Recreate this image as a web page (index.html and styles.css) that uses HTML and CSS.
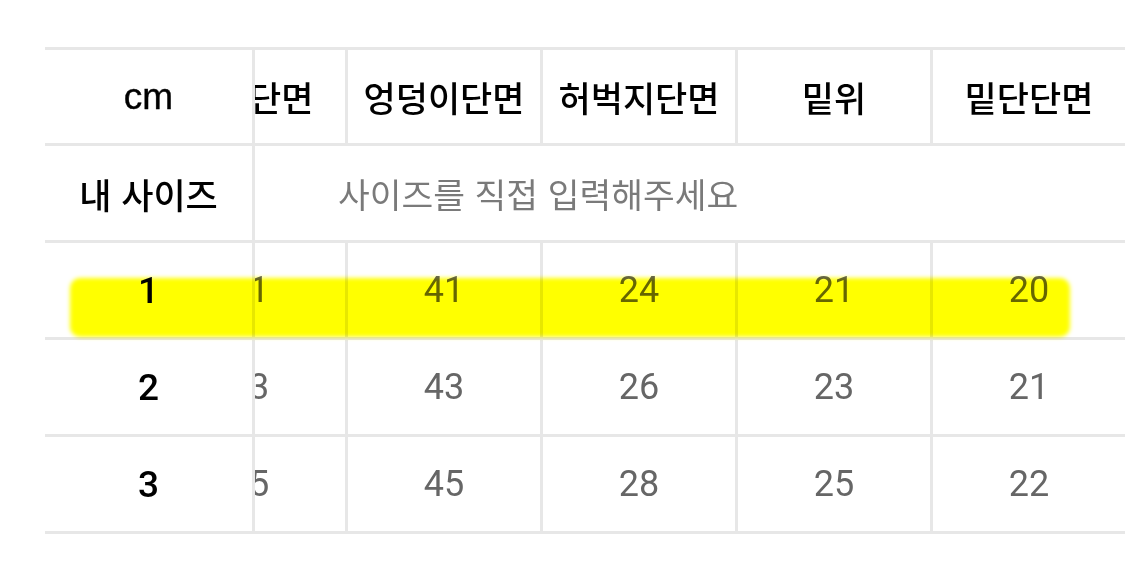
FILE: index.html
```html
<!DOCTYPE html>
<html lang="ko">
<head>
<meta charset="utf-8">
<title>사이즈</title>
<link rel="stylesheet" href="styles.css">
</head>
<body>
<div class="sheet">
  <div class="table">
    <div class="fixed">
      <div class="fcell head unit">cm</div>
      <div class="fcell label">내 사이즈</div>
      <div class="fcell num">1</div>
      <div class="fcell num">2</div>
      <div class="fcell num">3</div>
    </div>
    <div class="scroll">
      <div class="track">
        <div class="row head">
          <div class="cell">허리단면</div>
          <div class="cell">엉덩이단면</div>
          <div class="cell">허벅지단면</div>
          <div class="cell">밑위</div>
          <div class="cell">밑단단면</div>
        </div>
        <div class="row input">
          <span class="placeholder">사이즈를 직접 입력해주세요</span>
        </div>
        <div class="row data">
          <div class="cell">31</div>
          <div class="cell">41</div>
          <div class="cell">24</div>
          <div class="cell">21</div>
          <div class="cell">20</div>
        </div>
        <div class="row data">
          <div class="cell">33</div>
          <div class="cell">43</div>
          <div class="cell">26</div>
          <div class="cell">23</div>
          <div class="cell">21</div>
        </div>
        <div class="row data">
          <div class="cell">35</div>
          <div class="cell">45</div>
          <div class="cell">28</div>
          <div class="cell">25</div>
          <div class="cell">22</div>
        </div>
      </div>
    </div>
  </div>
  <div class="mark"></div>
</div>
</body>
</html>
```
FILE: styles.css
```css
html, body {
  margin: 0;
  padding: 0;
  background: #ffffff;
}

.sheet {
  position: relative;
  padding: 47px 0 0 45px;
  height: 580px;
  box-sizing: border-box;
  overflow: hidden;
  font-family: "Noto Sans CJK KR", "Noto Sans", sans-serif;
}

.table {
  display: flex;
  border-top: 3px solid #e7e7e7;
}

.fixed {
  flex: none;
  width: 210px;
  box-sizing: border-box;
  border-right: 3px solid #e7e7e7;
  background: #ffffff;
}

.fcell {
  height: 97px;
  box-sizing: border-box;
  border-bottom: 3px solid #e7e7e7;
  display: flex;
  align-items: center;
  justify-content: center;
  color: #000000;
}

.fcell.head {
  height: 96px;
}

.unit {
  font-family: "Liberation Sans", Arial, sans-serif;
  font-size: 37px;
  -webkit-text-stroke: 0.4px #000000;
}

.label {
  font-size: 35px;
  font-weight: 500;
}

.num {
  font-family: Roboto, "Liberation Sans", sans-serif;
  font-size: 37px;
  font-weight: 500;
}

.scroll {
  flex: 1;
  overflow: hidden;
}

.track {
  margin-left: -105px;
  width: max-content;
}

.row {
  display: flex;
  height: 97px;
  box-sizing: border-box;
  border-bottom: 3px solid #e7e7e7;
}

.row.head {
  height: 96px;
}

.cell {
  width: 195px;
  box-sizing: border-box;
  border-left: 3px solid #e7e7e7;
  display: flex;
  align-items: center;
  justify-content: center;
}

.head .cell {
  font-size: 35px;
  font-weight: 500;
  color: #000000;
  white-space: nowrap;
}

.data .cell {
  font-family: Roboto, "Liberation Sans", sans-serif;
  font-size: 36px;
  color: #666666;
}

.input {
  align-items: center;
  padding-left: 188px;
}

.placeholder {
  font-size: 34.5px;
  color: #7a7a7a;
}

.mark {
  position: absolute;
  left: 70px;
  top: 278px;
  width: 1000px;
  height: 59px;
  background: #ffff00;
  border-radius: 10px;
  filter: blur(2px);
  mix-blend-mode: multiply;
}
```
